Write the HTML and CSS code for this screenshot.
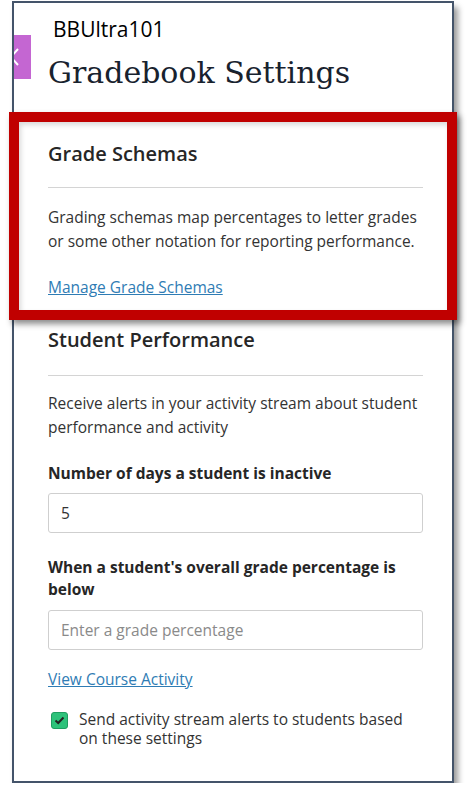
FILE: index.html
```html
<!DOCTYPE html>
<html lang="en">
<head>
    <meta charset="UTF-8">
    <meta name="viewport" content="width=device-width, initial-scale=1.0">
    <title>Gradebook Settings</title>
    <link rel="stylesheet" href="styles.css">
</head>
<body>
    <div class="panel">
        <div class="back-tab">
            <svg width="10" height="18" viewBox="0 0 10 18">
                <path d="M8 1 L1 9 L8 17" fill="none" stroke="#fff" stroke-width="2"/>
            </svg>
        </div>

        <div class="course">BBUltra101</div>
        <h1 class="title">Gradebook Settings</h1>

        <section class="section highlight">
            <h2>Grade Schemas</h2>
            <p>Grading schemas map percentages to letter grades or some other notation for reporting performance.</p>
            <a href="#" class="link">Manage Grade Schemas</a>
        </section>

        <section class="section">
            <h2>Student Performance</h2>
            <p>Receive alerts in your activity stream about student performance and activity</p>

            <label class="field-label" for="days">Number of days a student is inactive</label>
            <input class="field" id="days" type="text" value="5">

            <label class="field-label" for="grade">When a student's overall grade percentage is below</label>
            <input class="field" id="grade" type="text" placeholder="Enter a grade percentage">

            <a href="#" class="link view-link">View Course Activity</a>

            <div class="check-row">
                <span class="checkbox">
                    <svg width="11" height="9" viewBox="0 0 11 9">
                        <path d="M1.5 4.5 L4.2 7 L9.5 1.5" fill="none" stroke="#222" stroke-width="2"/>
                    </svg>
                </span>
                <span>Send activity stream alerts to students based on these settings</span>
            </div>
        </section>
    </div>
</body>
</html>
```

FILE: styles.css
```css
body {
    margin: 0;
    font-family: 'Open Sans', sans-serif;
    color: #333;
    background-color: #fff;
}

.panel {
    position: relative;
    width: 442px;
    height: 782px;
    margin: 1px 0 0 12px;
    padding: 0 29px 0 34px;
    box-sizing: border-box;
    border: 2px solid #44546a;
    background-color: #fff;
    box-shadow: 4px 6px 6px rgba(0, 0, 0, 0.4);
}

.back-tab {
    position: absolute;
    left: 0;
    top: 32px;
    width: 17px;
    height: 44px;
    background-color: #c466d2;
    overflow: hidden;
}

.back-tab svg {
    position: absolute;
    left: -4px;
    top: 13px;
}

.course {
    margin: 13px 0 0 5px;
    font-size: 21px;
    line-height: 26px;
    color: #000;
}

.title {
    margin: 13px 0 0;
    font-family: 'DejaVu Serif', serif;
    font-weight: normal;
    font-size: 30px;
    line-height: 36px;
    color: #18222e;
}

.section h2 {
    margin: 0;
    padding-bottom: 19px;
    border-bottom: 1px solid #d4d4d4;
    font-size: 20px;
    font-weight: 600;
    line-height: 28px;
    color: #262626;
}

.section p {
    margin: 17px 0 0;
    font-size: 15.5px;
    line-height: 24px;
}

.highlight {
    margin: 21px -34px 0 -39px;
    padding: 18px 24px 11px 29px;
    border: 10px solid #c00000;
    background-color: #fff;
    box-shadow: 3px 4px 6px rgba(0, 0, 0, 0.45), inset 2px 3px 5px rgba(0, 0, 0, 0.15);
}

.highlight + .section {
    margin-top: 6px;
}

.highlight + .section h2 {
    padding-bottom: 21px;
}

.highlight + .section p {
    margin-top: 15px;
}

.link {
    display: block;
    margin-top: 22px;
    font-size: 15.5px;
    line-height: 24px;
    color: #2f7cb4;
    text-decoration: underline;
    width: max-content;
}

.field-label {
    display: block;
    margin-top: 23px;
    font-size: 15.5px;
    font-weight: 700;
    line-height: 22px;
    color: #262626;
}

.field {
    display: block;
    width: 100%;
    height: 40px;
    margin-top: 9px;
    padding: 0 12px;
    box-sizing: border-box;
    border: 1px solid #cfcfcf;
    border-radius: 3px;
    font-family: 'Open Sans', sans-serif;
    font-size: 15.5px;
    color: #333;
}

.field::placeholder {
    color: #8a8a8a;
}

#grade {
    margin-top: 10px;
}

.view-link {
    margin-top: 17px;
}

.check-row {
    display: flex;
    gap: 11px;
    margin: 19px 0 0 3px;
    font-size: 15.5px;
    line-height: 19px;
}

.checkbox {
    flex: none;
    display: flex;
    align-items: center;
    justify-content: center;
    width: 17px;
    height: 17px;
    margin-top: 2px;
    box-sizing: border-box;
    border: 1px solid #1f9d60;
    border-radius: 3px;
    background-color: #2dc27a;
}
```
